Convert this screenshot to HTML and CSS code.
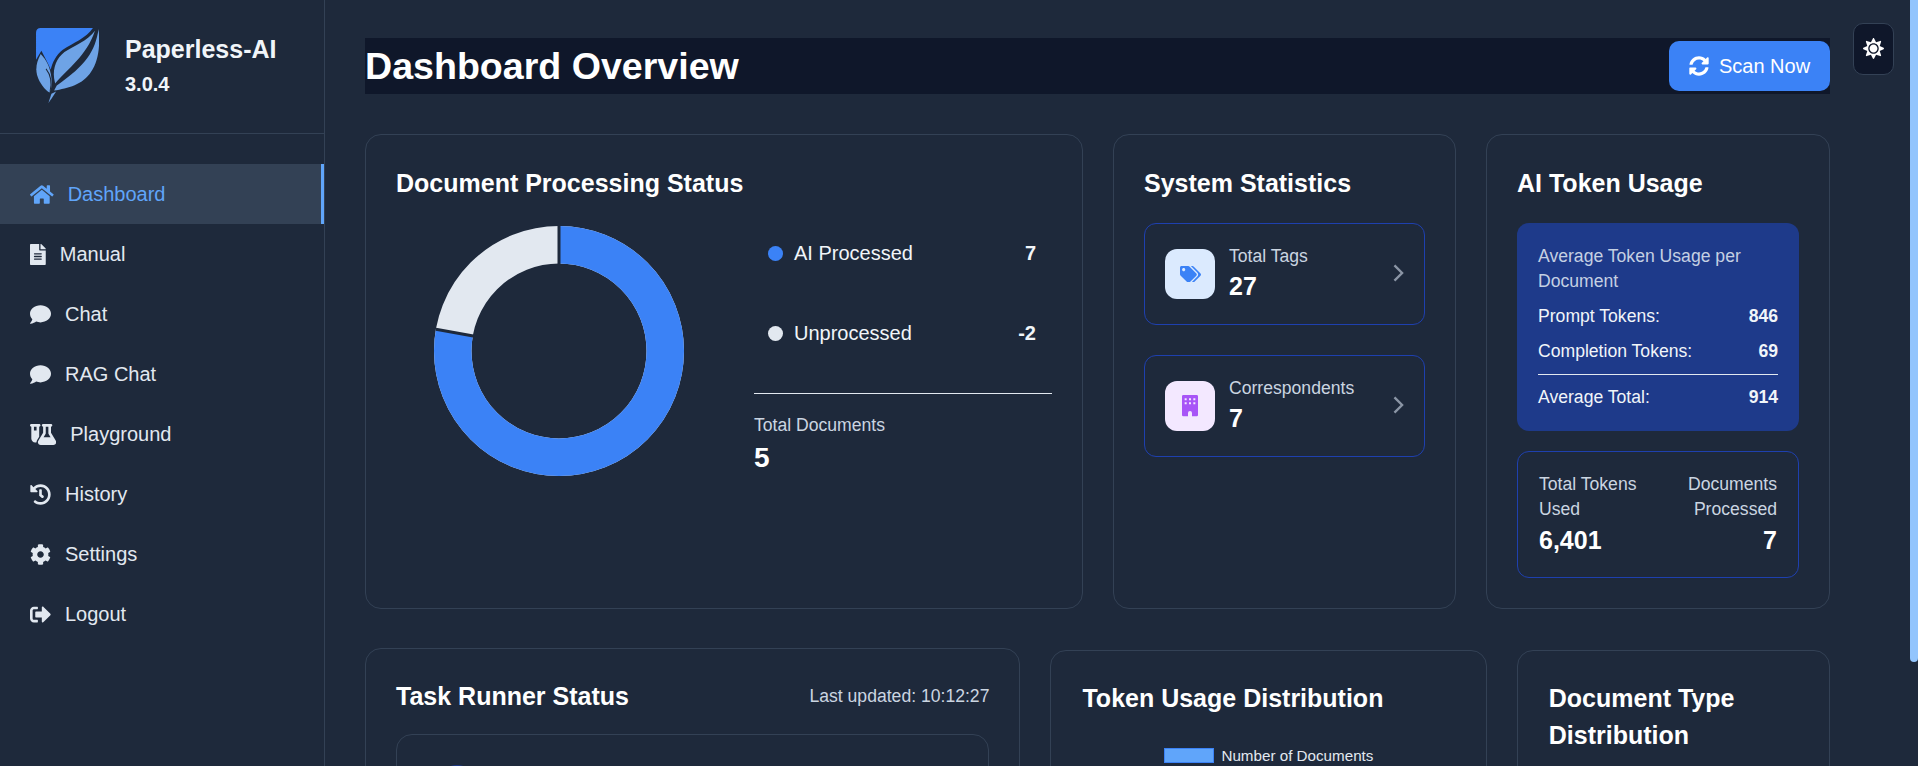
FILE: index.html
```html
<!DOCTYPE html>
<html lang="en">
<head>
  <meta charset="UTF-8" />
  <title>Paperless-AI Dashboard</title>
  <link rel="stylesheet" href="styles.css">
</head>
<body>

  <div class="sidebar">
    <div class="brand">
      <svg class="logo" viewBox="0 0 188 224">
        <path fill="#3b82f6" d="M0 14Q0 0 14 0L170 0C150 30 110 45 80 65C60 80 48 105 44 125C38 110 25 85 16 68L0 95Z"/>
        <path fill="#6ea3e6" d="M176 8C155 38 110 55 85 72C62 90 50 118 54 150L57 166C95 120 150 85 176 8Z"/>
        <path fill="#6ea3e6" d="M187 3C176 70 150 110 62 172L54 187C95 180 140 170 165 130C185 100 192 60 187 3Z"/>
        <path fill="#6ea3e6" d="M14 78C30 95 42 115 46 150C48 170 45 185 40 193C28 185 10 165 3 140C-2 120 2 100 14 78Z"/>
        <path fill="#6ea3e6" d="M37 224L46 196L60 190L47 210Z"/>
        <path fill="none" stroke="#1e293b" stroke-width="3" d="M30 122C44 140 48 165 42 190"/>
      </svg>
      <div class="brand-text">
        <div class="brand-name">Paperless-AI</div>
        <div class="brand-version">3.0.4</div>
      </div>
    </div>
    <ul class="nav">
      <li class="active">
        <svg class="nav-icon" viewBox="0 0 576 512"><path d="M280.37 148.26L96 300.11V464a16 16 0 0 0 16 16l112.06-.29a16 16 0 0 0 15.92-16V368a16 16 0 0 1 16-16h64a16 16 0 0 1 16 16v95.64a16 16 0 0 0 16 16.05L464 480a16 16 0 0 0 16-16V300L295.67 148.26a12.19 12.19 0 0 0-15.3 0zM571.6 251.47L488 182.56V44.05a12 12 0 0 0-12-12h-56a12 12 0 0 0-12 12v72.61L318.47 43a48 48 0 0 0-61 0L4.34 251.47a12 12 0 0 0-1.6 16.9l25.5 31A12 12 0 0 0 45.15 301l235.22-193.74a12.19 12.19 0 0 1 15.3 0L530.9 301a12 12 0 0 0 16.9-1.6l25.5-31a12 12 0 0 0-1.7-16.93z"/></svg>
        Dashboard
      </li>
      <li>
        <svg class="nav-icon" viewBox="0 0 384 512"><path d="M224 136V0H24C10.7 0 0 10.7 0 24v464c0 13.3 10.7 24 24 24h336c13.3 0 24-10.7 24-24V160H248c-13.2 0-24-10.8-24-24zm64 236c0 6.6-5.4 12-12 12H108c-6.6 0-12-5.4-12-12v-8c0-6.6 5.4-12 12-12h168c6.6 0 12 5.4 12 12v8zm0-64c0 6.6-5.4 12-12 12H108c-6.6 0-12-5.4-12-12v-8c0-6.6 5.4-12 12-12h168c6.6 0 12 5.4 12 12v8zm0-72v8c0 6.6-5.4 12-12 12H108c-6.6 0-12-5.4-12-12v-8c0-6.6 5.4-12 12-12h168c6.6 0 12 5.4 12 12zm96-114.1v6.1H256V0h6.1c6.4 0 12.5 2.5 17 7l97.9 98c4.5 4.5 7 10.6 7 16.9z"/></svg>
        Manual
      </li>
      <li>
        <svg class="nav-icon" viewBox="0 0 512 512"><path d="M256 32C114.6 32 0 125.1 0 240c0 49.6 21.4 95 57 130.7C44.5 421.1 2.7 466 2.2 466.5c-2.2 2.3-2.8 5.7-1.5 8.7S4.8 480 8 480c66.3 0 116-31.8 140.6-51.4 32.7 12.3 69 19.4 107.4 19.4 141.4 0 256-93.1 256-208S397.4 32 256 32z"/></svg>
        Chat
      </li>
      <li>
        <svg class="nav-icon" viewBox="0 0 512 512"><path d="M256 32C114.6 32 0 125.1 0 240c0 49.6 21.4 95 57 130.7C44.5 421.1 2.7 466 2.2 466.5c-2.2 2.3-2.8 5.7-1.5 8.7S4.8 480 8 480c66.3 0 116-31.8 140.6-51.4 32.7 12.3 69 19.4 107.4 19.4 141.4 0 256-93.1 256-208S397.4 32 256 32z"/></svg>
        RAG Chat
      </li>
      <li>
        <svg class="nav-icon" viewBox="0 0 640 512"><path d="M175 389.4c-9.8 16-15 34.3-15 53.1c-10 3.5-20.8 5.5-32 5.5c-53 0-96-43-96-96V64C14.3 64 0 49.7 0 32S14.3 0 32 0H96h64 64c17.7 0 32 14.3 32 32s-14.3 32-32 32V309.9l-49 79.5zM96 64v96h64V64H96zM352 0H480h32c17.7 0 32 14.3 32 32s-14.3 32-32 32V214.9L629.7 406.2c6.7 10.9 10.3 23.5 10.3 36.4c0 38.3-31.1 69.4-69.4 69.4H261.4c-38.3 0-69.4-31.1-69.4-69.4c0-12.8 3.6-25.4 10.3-36.4L320 214.9V64c-17.7 0-32-14.3-32-32s14.3-32 32-32h32zm32 64V224c0 5.9-1.6 11.7-4.7 16.8L330.5 320h171l-48.8-79.2c-3.1-5-4.7-10.8-4.7-16.8V64H384z"/></svg>
        Playground
      </li>
      <li>
        <svg class="nav-icon" viewBox="0 0 512 512"><path d="M504 255.531c.253 136.64-111.18 248.372-247.82 248.468-59.015.042-113.223-20.53-155.822-54.911-11.077-8.94-11.905-25.541-1.839-35.607l11.267-11.267c8.609-8.609 22.353-9.551 31.891-1.984C173.062 425.135 212.781 440 256 440c101.705 0 184-82.311 184-184 0-101.705-82.311-184-184-184-48.814 0-93.149 18.969-126.068 49.932l50.754 50.754c10.08 10.08 2.941 27.314-11.313 27.314H24c-8.837 0-16-7.163-16-16V38.627c0-14.254 17.234-21.393 27.314-11.314l49.372 49.372C129.209 34.136 189.552 8 256 8c136.81 0 247.747 110.78 248 247.531zm-180.912 78.784l9.823-12.63c8.138-10.463 6.253-25.542-4.21-33.679L288 256.349V152c0-13.255-10.745-24-24-24h-16c-13.255 0-24 10.745-24 24v135.651l65.409 50.874c10.463 8.137 25.541 6.253 33.679-4.21z"/></svg>
        History
      </li>
      <li>
        <svg class="nav-icon" viewBox="0 0 512 512"><path d="M487.4 315.7l-42.6-24.6c4.3-23.2 4.3-47 0-70.2l42.6-24.6c4.9-2.8 7.1-8.6 5.5-14-11.1-35.6-30-67.8-54.7-94.6-3.8-4.1-10-5.1-14.8-2.3L380.8 110c-17.9-15.4-38.5-27.3-60.8-35.1V25.8c0-5.6-3.9-10.5-9.4-11.7-36.7-8.2-74.3-7.8-109.2 0-5.5 1.2-9.4 6.1-9.4 11.7V75c-22.2 7.9-42.8 19.8-60.8 35.1L88.7 85.5c-4.9-2.8-11-1.9-14.8 2.3-24.7 26.7-43.6 58.9-54.7 94.6-1.7 5.4.6 11.2 5.5 14L67.3 221c-4.3 23.2-4.3 47 0 70.2l-42.6 24.6c-4.9 2.8-7.1 8.6-5.5 14 11.1 35.6 30 67.8 54.7 94.6 3.8 4.1 10 5.1 14.8 2.3l42.6-24.6c17.9 15.4 38.5 27.3 60.8 35.1v49.2c0 5.6 3.9 10.5 9.4 11.7 36.7 8.2 74.3 7.8 109.2 0 5.5-1.2 9.4-6.1 9.4-11.7v-49.2c22.2-7.9 42.8-19.8 60.8-35.1l42.6 24.6c4.9 2.8 11 1.9 14.8-2.3 24.7-26.7 43.6-58.9 54.7-94.6 1.5-5.5-.7-11.3-5.6-14.1zM256 336c-44.1 0-80-35.9-80-80s35.9-80 80-80 80 35.9 80 80-35.9 80-80 80z"/></svg>
        Settings
      </li>
      <li>
        <svg class="nav-icon" viewBox="0 0 512 512"><path d="M497 273L329 441c-15 15-41 4.5-41-17v-96H152c-13.3 0-24-10.7-24-24v-96c0-13.3 10.7-24 24-24h136V88c0-21.4 25.9-32 41-17l168 168c9.3 9.4 9.3 24.6 0 34zM192 436v-40c0-6.6-5.4-12-12-12H96c-17.7 0-32-14.3-32-32V160c0-17.7 14.3-32 32-32h84c6.6 0 12-5.4 12-12V76c0-6.6-5.4-12-12-12H96c-53 0-96 43-96 96v192c0 53 43 96 96 96h84c6.6 0 12-5.4 12-12z"/></svg>
        Logout
      </li>
    </ul>
  </div>

  <div class="main">

    <div class="page-header">
      <h1>Dashboard Overview</h1>
      <button class="scan-btn">
        <svg class="scan-icon" viewBox="0 0 512 512"><path d="M370.72 133.28C339.458 104.008 298.888 87.962 255.848 88c-77.458.068-144.328 53.178-162.791 126.85-1.344 5.363-6.122 9.15-11.651 9.15H24.103c-7.498 0-13.194-6.807-11.807-14.176C33.933 94.924 134.813 8 256 8c66.448 0 126.791 26.136 171.315 68.685L463.03 40.97C478.149 25.851 504 36.559 504 57.941V192c0 13.255-10.745 24-24 24H345.941c-21.382 0-32.09-25.851-16.971-40.971l41.75-41.749zM32 296h134.059c21.382 0 32.09 25.851 16.971 40.971l-41.75 41.75c31.262 29.273 71.835 45.319 114.876 45.28 77.418-.07 144.315-53.144 162.787-126.849 1.344-5.363 6.122-9.15 11.651-9.15h57.304c7.498 0 13.194 6.807 11.807 14.176C478.067 417.076 377.187 504 256 504c-66.448 0-126.791-26.136-171.315-68.685L48.97 471.03C33.851 486.149 8 475.441 8 454.059V320c0-13.255 10.745-24 24-24z"/></svg>
        Scan Now
      </button>
    </div>

    <div class="row-top">

      <!-- PROCESSING STATUS -->
      <section class="card">
        <h2>Document Processing Status</h2>
        <div class="status-body">
          <svg class="donut" viewBox="0 0 250 250">
            <circle class="donut-light" cx="125" cy="125" r="106.25"/>
            <circle class="donut-blue" cx="125" cy="125" r="106.25" pathLength="360" stroke-dasharray="280 80"/>
            <line class="donut-gap" x1="125" y1="0" x2="125" y2="38"/>
            <line class="donut-gap" x1="1.9" y1="103.3" x2="39.3" y2="109.9"/>
          </svg>
          <div class="status-info">
            <div class="legend-row">
              <span class="dot dot-blue"></span>
              <span class="legend-label">AI Processed</span>
              <span class="legend-value">7</span>
            </div>
            <div class="legend-row">
              <span class="dot dot-light"></span>
              <span class="legend-label">Unprocessed</span>
              <span class="legend-value">-2</span>
            </div>
            <div class="status-total">
              <div class="muted">Total Documents</div>
              <div class="big-value">5</div>
            </div>
          </div>
        </div>
      </section>

      <!-- SYSTEM STATISTICS -->
      <section class="card">
        <h2>System Statistics</h2>
        <div class="stat-list">
          <div class="stat-box">
            <div class="stat-icon stat-icon-blue">
              <svg class="tag-icon" viewBox="0 0 640 512"><path d="M497.941 225.941L286.059 14.059A48 48 0 0 0 252.118 0H48C21.49 0 0 21.49 0 48v204.118a48 48 0 0 0 14.059 33.941l211.882 211.882c18.744 18.745 49.136 18.746 67.882 0l204.118-204.118c18.745-18.745 18.745-49.137 0-67.882zM112 160c-26.51 0-48-21.49-48-48s21.49-48 48-48 48 21.49 48 48-21.49 48-48 48zm513.941 133.823L421.823 497.941c-18.745 18.745-49.137 18.745-67.882 0l-.36-.36L527.64 323.522c16.999-16.999 26.36-39.6 26.36-63.64s-9.362-46.641-26.36-63.64L331.397 0h48.721a48 48 0 0 1 33.941 14.059l211.882 211.882c18.745 18.745 18.745 49.137 0 67.882z"/></svg>
            </div>
            <div class="stat-text">
              <div class="muted">Total Tags</div>
              <div class="big-value">27</div>
            </div>
            <svg class="chevron" viewBox="0 0 12 20"><path d="M1.5 1.5L10 10L1.5 18.5"/></svg>
          </div>
          <div class="stat-box">
            <div class="stat-icon stat-icon-purple">
              <svg class="building-icon" viewBox="0 0 384 512"><path fill-rule="evenodd" d="M32 0H352A32 32 0 0 1 384 32V480A32 32 0 0 1 352 512H240V432A48 48 0 0 0 144 432V512H32A32 32 0 0 1 0 480V32A32 32 0 0 1 32 0ZM64 80V128H112V80ZM168 80V128H216V80ZM272 80V128H320V80ZM64 176V224H112V176ZM168 176V224H216V176ZM272 176V224H320V176Z"/></svg>
            </div>
            <div class="stat-text">
              <div class="muted">Correspondents</div>
              <div class="big-value">7</div>
            </div>
            <svg class="chevron" viewBox="0 0 12 20"><path d="M1.5 1.5L10 10L1.5 18.5"/></svg>
          </div>
        </div>
      </section>

      <!-- TOKEN USAGE -->
      <section class="card">
        <h2>AI Token Usage</h2>
        <div class="token-avg">
          <div class="token-avg-title">Average Token Usage per Document</div>
          <div class="token-row"><span>Prompt Tokens:</span><b>846</b></div>
          <div class="token-row"><span>Completion Tokens:</span><b>69</b></div>
          <div class="token-row token-row-total"><span>Average Total:</span><b>914</b></div>
        </div>
        <div class="token-totals">
          <div>
            <div class="muted">Total Tokens Used</div>
            <div class="big-value">6,401</div>
          </div>
          <div class="align-right">
            <div class="muted">Documents Processed</div>
            <div class="big-value">7</div>
          </div>
        </div>
      </section>

    </div>

    <div class="row-bottom">

      <!-- TASK RUNNER -->
      <section class="card">
        <div class="task-head">
          <h2>Task Runner Status</h2>
          <span class="muted">Last updated: 10:12:27</span>
        </div>
        <div class="task-box">
          <div class="task-spinner"></div>
        </div>
      </section>

      <!-- TOKEN DISTRIBUTION -->
      <section class="card card-lower">
        <h2>Token Usage Distribution</h2>
        <div class="chart-legend">
          <span class="chart-swatch"></span>
          <span>Number of Documents</span>
        </div>
      </section>

      <!-- DOCUMENT TYPE -->
      <section class="card card-lower">
        <h2>Document Type Distribution</h2>
      </section>

    </div>
  </div>

  <button class="theme-btn">
    <svg viewBox="0 0 512 512"><path d="M256 160c-52.9 0-96 43.1-96 96s43.1 96 96 96 96-43.1 96-96-43.1-96-96-96zm246.4 80.5l-94.7-47.3 33.5-100.4c4.5-13.6-8.4-26.5-21.9-21.9l-100.4 33.5-47.4-94.8c-6.4-12.8-24.6-12.8-31 0l-47.3 94.7L92.7 70.8c-13.6-4.5-26.5 8.4-21.9 21.9l33.5 100.4-94.7 47.4c-12.8 6.4-12.8 24.6 0 31l94.7 47.3-33.5 100.5c-4.5 13.6 8.4 26.5 21.9 21.9l100.4-33.5 47.3 94.7c6.4 12.8 24.6 12.8 31 0l47.3-94.7 100.4 33.5c13.6 4.5 26.5-8.4 21.9-21.9l-33.5-100.4 94.7-47.3c13-6.5 13-24.7.2-31.1zm-155.9 106c-49.9 49.9-131.1 49.9-181 0-49.9-49.9-49.9-131.1 0-181 49.9-49.9 131.1-49.9 181 0 49.9 49.9 49.9 131.1 0 181z"/></svg>
  </button>
  <div class="scroll-thumb"></div>

</body>
</html>
```

FILE: styles.css
```css
html, body { height: 100%; }

body {
  margin: 0;
  font-family: 'Liberation Sans', Arial, sans-serif;
  display: flex;
  background: #1e293b;
  color: #fff;
  overflow: hidden;
  position: relative;
}

/* sidebar */
.sidebar {
  width: 324px;
  flex-shrink: 0;
  height: 100vh;
  border-right: 1px solid #334155;
}

.brand {
  height: 134px;
  box-sizing: border-box;
  border-bottom: 1px solid #334155;
  display: flex;
  padding: 28px 0 0 36px;
}

.logo { width: 63px; height: 75px; }

.brand-text { margin-left: 26px; padding-top: 3px; }
.brand-name { font-size: 25px; font-weight: 700; line-height: 36px; color: #f1f5f9; }
.brand-version { font-size: 20px; font-weight: 700; line-height: 35px; color: #f1f5f9; }

.nav { list-style: none; margin: 30px 0 0; padding: 0; }

.nav li {
  height: 60px;
  padding-left: 30px;
  display: flex;
  align-items: center;
  gap: 14px;
  font-size: 20px;
  color: #e2e8f0;
}

.nav li.active {
  background: #334155;
  color: #60a5fa;
  box-shadow: inset -3px 0 0 #60a5fa;
}

.nav-icon { height: 21px; fill: currentColor; flex-shrink: 0; }

/* main column */
.main {
  flex: 1;
  min-width: 0;
  height: 100vh;
  overflow: hidden;
  padding: 38px 88px 0 40px;
}

.page-header {
  height: 56px;
  background: #0f172a;
  display: flex;
  align-items: center;
  justify-content: space-between;
  margin-bottom: 40px;
}

h1 { margin: 0; font-size: 37.6px; font-weight: 700; }

.scan-btn {
  height: 50px;
  width: 161px;
  border: none;
  border-radius: 10px;
  background: #3b82f6;
  color: #fff;
  font: inherit;
  font-size: 20px;
  display: flex;
  align-items: center;
  justify-content: center;
  gap: 10px;
}

.scan-icon { width: 20px; height: 20px; fill: #fff; }

.row-top {
  display: grid;
  grid-template-columns: 718fr 343fr 344fr;
  gap: 30px;
}

.row-bottom {
  display: grid;
  grid-template-columns: 655fr 436fr 313fr;
  gap: 30px;
  margin-top: 39px;
}

.card {
  box-sizing: border-box;
  border: 1px solid #334155;
  border-radius: 16px;
  padding: 30px;
  min-height: 474px;
}

.row-bottom .card { padding-top: 29px; }
.row-bottom .card-lower { margin-top: 2px; padding-left: 31px; }

h2 {
  margin: 0;
  font-size: 25px;
  font-weight: 700;
  line-height: 37px;
}

.muted { color: #cbd5e1; font-size: 17.6px; line-height: 25px; }
.big-value { font-size: 25px; font-weight: 700; line-height: 34px; }
.align-right { text-align: right; }

/* processing status */
.status-body { display: flex; margin-top: 24px; }

.donut { width: 250px; height: 250px; margin-left: 38px; flex-shrink: 0; }
.donut circle { fill: none; stroke-width: 37.5; }
.donut-light { stroke: #e2e8f0; }
.donut-blue { stroke: #3b82f6; transform: rotate(-90deg); transform-origin: center; }
.donut-gap { stroke: #1e293b; stroke-width: 3; }

.status-info { flex: 1; margin-left: 70px; }

.legend-row {
  height: 54px;
  margin-bottom: 26px;
  padding: 0 16px 0 14px;
  display: flex;
  align-items: center;
  font-size: 20px;
  color: #f1f5f9;
}

.dot { width: 15px; height: 15px; border-radius: 50%; margin-right: 11px; }
.dot-blue { background: #3b82f6; }
.dot-light { background: #e2e8f0; }
.legend-label { flex: 1; }
.legend-value { font-weight: 700; }

.status-total { border-top: 1px solid #e2e8f0; margin-top: 33px; padding-top: 19px; }
.status-total .big-value { font-size: 28px; line-height: 40px; }

/* system statistics */
.stat-list { display: flex; flex-direction: column; gap: 30px; margin-top: 21px; }

.stat-box {
  height: 102px;
  box-sizing: border-box;
  border: 1px solid #1e40af;
  border-radius: 12px;
  padding: 0 20px;
  display: flex;
  align-items: center;
}

.stat-icon {
  width: 50px;
  height: 50px;
  border-radius: 12px;
  display: flex;
  align-items: center;
  justify-content: center;
  flex-shrink: 0;
}

.stat-icon-blue { background: #dbeafe; }
.stat-icon-purple { background: #f3e8ff; }
.tag-icon { width: 21px; fill: #3b82f6; }
.building-icon { width: 16px; fill: #a855f7; }

.stat-text { flex: 1; margin-left: 14px; padding-bottom: 2px; }

.chevron { width: 11px; height: 18px; margin-bottom: 2px; fill: none; stroke: #8b95a5; stroke-width: 2.6; }

/* token usage */
.token-avg {
  margin-top: 21px;
  height: 208px;
  box-sizing: border-box;
  padding: 21px;
  background: #1e3a8a;
  border-radius: 12px;
}

.token-avg-title { color: #c5d0e3; font-size: 17.6px; line-height: 25px; margin-bottom: 5px; }

.token-row {
  display: flex;
  justify-content: space-between;
  font-size: 17.6px;
  line-height: 35px;
  color: #f1f5f9;
}

.token-row-total { border-top: 1px solid #e2e8f0; margin-top: 5px; padding-top: 5px; }

.token-totals {
  margin-top: 20px;
  height: 127px;
  box-sizing: border-box;
  padding: 20px 21px;
  border: 1px solid #1e40af;
  border-radius: 12px;
  display: flex;
  justify-content: space-between;
  gap: 20px;
}

.token-totals .big-value { margin-top: 1px; }

/* task runner */
.task-head { display: flex; justify-content: space-between; align-items: center; }

.task-box {
  margin-top: 19px;
  height: 200px;
  border: 1px solid #334155;
  border-radius: 16px;
  padding-top: 30px;
}

.task-spinner {
  width: 40px;
  height: 40px;
  margin-left: 40px;
  border-radius: 50%;
  background: #1e3a8a;
}

/* token distribution */
.chart-legend {
  display: flex;
  align-items: center;
  gap: 7px;
  margin: 30px 0 0 82px;
  font-size: 15.2px;
  color: #e2e8f0;
}

.chart-swatch {
  width: 48px;
  height: 13px;
  background: #60a5fa;
  border: 1px solid #3b82f6;
}

/* overlays */
.theme-btn {
  position: absolute;
  top: 23px;
  left: 1853px;
  width: 41px;
  height: 52px;
  padding: 0;
  background: #0f172a;
  border: 1px solid #334155;
  border-radius: 10px;
  display: flex;
  align-items: center;
  justify-content: center;
}

.theme-btn svg { width: 21px; height: 21px; fill: #fff; margin-top: -2px; }

.scroll-thumb {
  position: absolute;
  top: 0;
  right: 0;
  width: 8px;
  height: 662px;
  background: #93c5fd;
  border-bottom-left-radius: 4px;
  border-bottom-right-radius: 4px;
}
```
